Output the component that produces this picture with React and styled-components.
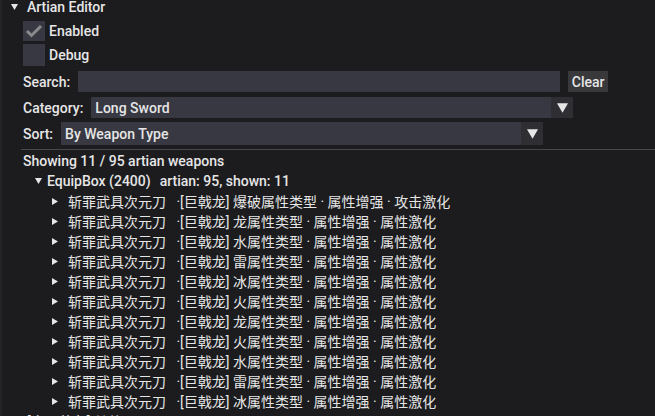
import React from 'react';
import styled, { createGlobalStyle } from 'styled-components';

const GlobalStyle = createGlobalStyle`
  html, body {
    margin: 0;
    padding: 0;
    background: #1c1c1f;
    overflow: hidden;
  }
  body {
    font-family: "Roboto", "Noto Sans CJK SC", sans-serif;
    font-size: 14px;
    font-weight: 500;
    color: #e6e6e6;
  }
`;

const rows = [
  '爆破属性类型 · 属性增强 · 攻击激化',
  '龙属性类型 · 属性增强 · 属性激化',
  '水属性类型 · 属性增强 · 属性激化',
  '雷属性类型 · 属性增强 · 属性激化',
  '冰属性类型 · 属性增强 · 属性激化',
  '火属性类型 · 属性增强 · 属性激化',
  '龙属性类型 · 属性增强 · 属性激化',
  '火属性类型 · 属性增强 · 属性激化',
  '水属性类型 · 属性增强 · 属性激化',
  '雷属性类型 · 属性增强 · 属性激化',
  '冰属性类型 · 属性增强 · 属性激化',
];

const DownArrow = ({ size = 7 }) => (
  <svg width={size} height={size - 1} viewBox="0 0 7 6">
    <polygon points="0,0 7,0 3.5,6" fill="#e6e6e6" />
  </svg>
);

const RightArrow = () => (
  <svg width="6" height="7" viewBox="0 0 6 7">
    <polygon points="0,0 6,3.5 0,7" fill="#e6e6e6" />
  </svg>
);

const Check = () => (
  <svg width="18" height="14" viewBox="0 0 18 14">
    <polyline points="2,7 6.5,11.5 16,2" fill="none" stroke="#8a8a8e" strokeWidth="3" />
  </svg>
);

const App = () => (
  <>
    <GlobalStyle />
    <Window>
      <Header>
        <ArrowSlot><DownArrow /></ArrowSlot>
        <span>Artian Editor</span>
      </Header>

      <Body>
        <CheckRow $top={6}>
          <CheckBox $h={20}><Check /></CheckBox>
          <span>Enabled</span>
        </CheckRow>
        <CheckRow $top={3}>
          <CheckBox $h={22} />
          <span>Debug</span>
        </CheckRow>

        <FieldRow $top={5}>
          <Label>Search:</Label>
          <Input />
          <Button>Clear</Button>
        </FieldRow>

        <FieldRow $top={5}>
          <Label>Category:</Label>
          <Combo>
            <ComboText>Long Sword</ComboText>
            <ComboArrow><DownArrow size={11} /></ComboArrow>
          </Combo>
        </FieldRow>

        <FieldRow $top={4} $h={23}>
          <Label>Sort:</Label>
          <Combo>
            <ComboText>By Weapon Type</ComboText>
            <ComboArrow><DownArrow size={11} /></ComboArrow>
          </Combo>
        </FieldRow>

        <Separator />

        <TextRow>Showing 11 / 95 artian weapons</TextRow>

        <TreeRow $indent={12}>
          <ArrowSlot $w={12}><DownArrow /></ArrowSlot>
          <span>EquipBox (2400)</span>
          <Meta>artian: 95, shown: 11</Meta>
        </TreeRow>

        {rows.map((r, i) => (
          <TreeRow key={i} $indent={29} $light>
            <ArrowSlot $w={16}><RightArrow /></ArrowSlot>
            <span>斩罪武具次元刀&nbsp;&nbsp;&nbsp;·[巨戟龙] {r}</span>
          </TreeRow>
        ))}

        <TreeRow $indent={4} $light>
          <span>[太刀装备] 其他</span>
        </TreeRow>
      </Body>
    </Window>
  </>
);

const Window = styled.div`
  width: 655px;
  height: 418px;
  box-sizing: border-box;
  border-left: 2px solid #232328;
  overflow: hidden;
  margin-top: -2px;
`;

const Header = styled.div`
  display: flex;
  align-items: center;
  height: 17px;
  padding-left: 9px;
  white-space: nowrap;
`;

const ArrowSlot = styled.span`
  display: inline-flex;
  align-items: center;
  width: ${p => p.$w || 16}px;
  flex-shrink: 0;
`;

const Body = styled.div`
  display: flex;
  flex-direction: column;
  padding-left: 21px;
`;

const CheckRow = styled.div`
  display: flex;
  align-items: center;
  margin-top: ${p => p.$top}px;
  gap: 4px;
`;

const CheckBox = styled.div`
  width: 22px;
  height: ${p => p.$h}px;
  background: #383842;
  display: flex;
  align-items: center;
  justify-content: center;
`;

const FieldRow = styled.div`
  display: flex;
  align-items: center;
  height: ${p => p.$h || 21}px;
  margin-top: ${p => p.$top}px;
  gap: 8px;
`;

const Label = styled.span`
  white-space: nowrap;
`;

const Input = styled.div`
  width: 482px;
  height: 100%;
  background: #383842;
`;

const Button = styled.div`
  width: 40px;
  height: 100%;
  background: #39393c;
  display: flex;
  align-items: center;
  justify-content: center;
`;

const Combo = styled.div`
  width: 482px;
  height: 100%;
  background: #383842;
  display: flex;
  align-items: center;
`;

const ComboText = styled.span`
  flex: 1;
  padding-left: 4px;
`;

const ComboArrow = styled.div`
  width: 22px;
  height: 100%;
  background: #2f2f33;
  display: flex;
  align-items: center;
  justify-content: center;
`;

const Separator = styled.div`
  height: 1px;
  background: #47474c;
  margin-top: 4px;
  margin-left: -2px;
`;

const TextRow = styled.div`
  height: 20px;
  line-height: 20px;
  margin-top: 1px;
  white-space: nowrap;
`;

const TreeRow = styled.div`
  display: flex;
  align-items: center;
  height: 20px;
  padding-left: ${p => p.$indent}px;
  white-space: nowrap;
  font-weight: ${p => (p.$light ? 400 : 500)};
`;

const Meta = styled.span`
  margin-left: 9px;
`;

export default App;
